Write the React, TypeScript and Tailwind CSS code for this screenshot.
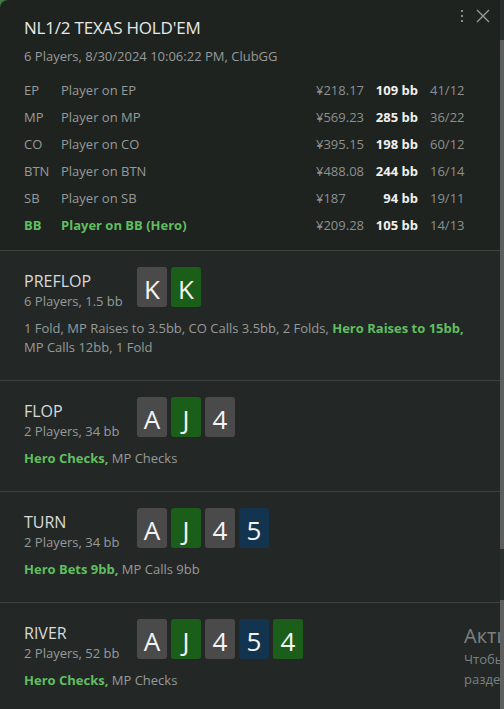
const players = [
  { pos: "EP", name: "Player on EP", money: "¥218.17", bb: "109 bb", ratio: "41/12" },
  { pos: "MP", name: "Player on MP", money: "¥569.23", bb: "285 bb", ratio: "36/22" },
  { pos: "CO", name: "Player on CO", money: "¥395.15", bb: "198 bb", ratio: "60/12" },
  { pos: "BTN", name: "Player on BTN", money: "¥488.08", bb: "244 bb", ratio: "16/14" },
  { pos: "SB", name: "Player on SB", money: "¥187", bb: "94 bb", ratio: "19/11" },
  { pos: "BB", name: "Player on BB (Hero)", money: "¥209.28", bb: "105 bb", ratio: "14/13", hero: true },
]

type CardColor = "gray" | "green" | "blue"

function Card({ rank, color }: { rank: string; color: CardColor }) {
  const bg =
    color === "green" ? "bg-[#1a5e1a]" : color === "blue" ? "bg-[#12344f]" : "bg-[#4a4a4a]"
  return (
    <div
      className={
        "flex h-10 w-[30px] justify-center overflow-hidden rounded-[3px] text-[26px] leading-[44px] text-[#f4f4f4] " +
        bg
      }
    >
      {rank}
    </div>
  )
}

function Street({
  title,
  info,
  cards,
  children,
}: {
  title: string
  info: string
  cards: { rank: string; color: CardColor }[]
  children: React.ReactNode
}) {
  return (
    <div className="border-t border-[#3c403f] bg-[#232827] px-6 pt-4 pb-[23px]">
      <div className="flex h-10 items-start">
        <div className="w-[113px] pt-[4px]">
          <div className="text-[16px] leading-[20px] text-[#dadada]">{title}</div>
          <div className="mt-[1px] text-[13px] leading-[18px] text-[#979a99]">{info}</div>
        </div>
        <div className="flex gap-1">
          {cards.map((c, i) => (
            <Card key={i} rank={c.rank} color={c.color} />
          ))}
        </div>
      </div>
      <div className="mt-3 text-[13px] leading-[19px] text-[#979a99]">{children}</div>
    </div>
  )
}

function Hero({ children }: { children: React.ReactNode }) {
  return <span className="font-bold text-[#5fbf5f]">{children}</span>
}

export default function App() {
  return (
    <div
      className="flex h-[709px] w-[504px] overflow-hidden bg-[#3d7a45]"
      style={{ fontFamily: '"Open Sans", "Noto Sans", sans-serif' }}
    >
      <div className="relative flex-1 overflow-hidden rounded-tl-[8px] bg-[#1e2320]">
        {/* header */}
        <div className="relative px-6 pt-4 pb-[11px]">
          <div className="absolute top-[9px] right-[10px] flex items-center gap-[13px]">
            <div className="flex flex-col gap-[3px]">
              <span className="h-[2px] w-[2px] bg-[#8c8f8e]" />
              <span className="h-[2px] w-[2px] bg-[#8c8f8e]" />
              <span className="h-[2px] w-[2px] bg-[#8c8f8e]" />
            </div>
            <svg width="14" height="14" viewBox="0 0 14 14" fill="none" stroke="#9a9d9c" strokeWidth="1.3">
              <path d="M1 1L13 13M13 1L1 13" />
            </svg>
          </div>
          <div className="text-[17px] leading-[24px] tracking-[-0.2px] text-[#e8e8e8]">NL1/2 TEXAS HOLD'EM</div>
          <div className="mt-[7px] text-[13px] leading-[18px] text-[#979a99]">
            6 Players, 8/30/2024 10:06:22 PM, ClubGG
          </div>
          <div className="mt-3">
            {players.map((p) => (
              <div key={p.pos} className="flex h-[27px] items-center whitespace-nowrap text-[13px]">
                <div className={"w-[37px] " + (p.hero ? "font-bold text-[#5fbf5f]" : "text-[#979a99]")}>
                  {p.pos}
                </div>
                <div className={"flex-1 " + (p.hero ? "font-bold text-[#5fbf5f]" : "text-[#979a99]")}>
                  {p.name}
                </div>
                <div className="w-[54px] text-[#8d908f]">{p.money}</div>
                <div className="flex w-[48px] justify-end font-bold text-[#f0f0f0]">{p.bb}</div>
                <div className="ml-3 w-[46px] text-[#8d908f]">{p.ratio}</div>
              </div>
            ))}
          </div>
        </div>

        <Street
          title="PREFLOP"
          info="6 Players, 1.5 bb"
          cards={[
            { rank: "K", color: "gray" },
            { rank: "K", color: "green" },
          ]}
        >
          1 Fold, MP Raises to 3.5bb, CO Calls 3.5bb, 2 Folds, <Hero>Hero Raises to 15bb,</Hero>
          <br />
          MP Calls 12bb, 1 Fold
        </Street>

        <Street
          title="FLOP"
          info="2 Players, 34 bb"
          cards={[
            { rank: "A", color: "gray" },
            { rank: "J", color: "green" },
            { rank: "4", color: "gray" },
          ]}
        >
          <Hero>Hero Checks,</Hero> MP Checks
        </Street>

        <Street
          title="TURN"
          info="2 Players, 34 bb"
          cards={[
            { rank: "A", color: "gray" },
            { rank: "J", color: "green" },
            { rank: "4", color: "gray" },
            { rank: "5", color: "blue" },
          ]}
        >
          <Hero>Hero Bets 9bb,</Hero> MP Calls 9bb
        </Street>

        <Street
          title="RIVER"
          info="2 Players, 52 bb"
          cards={[
            { rank: "A", color: "gray" },
            { rank: "J", color: "green" },
            { rank: "4", color: "gray" },
            { rank: "5", color: "blue" },
            { rank: "4", color: "green" },
          ]}
        >
          <Hero>Hero Checks,</Hero> MP Checks
        </Street>

        {/* windows activation watermark */}
        <div className="pointer-events-none absolute top-[623px] left-[464px] whitespace-nowrap text-[#7d807f]">
          <div className="text-[20px] leading-[26px]">Активация Windows</div>
          <div className="text-[13px] leading-[20px]">Чтобы активировать Windows, перейдите в</div>
          <div className="text-[13px] leading-[20px]">раздел "Параметры".</div>
        </div>
      </div>

      {/* scrollbar */}
      <div className="flex w-1 flex-col bg-[#2a2e2c]">
        <div className="h-[40px]" />
        <div className="h-[509px] bg-[#5e5e5e]" />
        <div className="h-[51px]" />
        <div className="flex-1 bg-[#5e5e5e]" />
      </div>
    </div>
  )
}
